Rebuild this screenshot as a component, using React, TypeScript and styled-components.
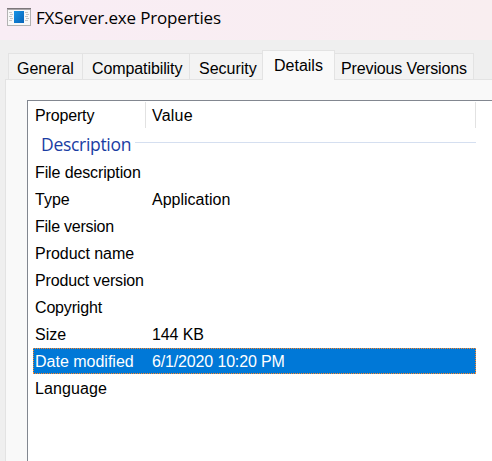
import React from "react";
import styled, { createGlobalStyle } from "styled-components";

const GlobalStyle = createGlobalStyle`
  * { box-sizing: border-box; }
  html, body { margin: 0; overflow: hidden; }
  body { font: 16px/20px "Liberation Sans", Arial, sans-serif; color: #000; }
`;

const Window = styled.main`
  width: 492px;
  height: 461px;
  display: flex;
  flex-direction: column;
  background: #efefef;
  overflow: hidden;
  white-space: nowrap;
`;

const TitleBar = styled.header`
  flex: none;
  height: 40px;
  display: flex;
  align-items: flex-start;
  gap: 5px;
  padding: 8px 0 0 7px;
  background: linear-gradient(90deg, #f9edf5, #f9eef0);
`;

const Title = styled.h1`
  margin: -2px 0 0;
  font: 400 17px/24px "Open Sans", "Noto Sans", sans-serif;
  letter-spacing: -0.16px;
`;

const TabStrip = styled.nav`
  flex: none;
  height: 39px;
  display: flex;
  align-items: flex-end;
  padding-left: 8px;
`;

const Tab = styled.div<{ $width: number; $active?: boolean; $track?: number; $inset?: number }>`
  flex: none;
  width: ${(p) => p.$width}px;
  height: ${(p) => (p.$active ? 30 : 26)}px;
  margin-bottom: ${(p) => (p.$active ? -1 : 0)}px;
  padding: 5px 0 0 ${(p) => p.$inset ?? 9}px;
  border: 1px solid #e3e3e3;
  border-bottom: 0;
  border-right-width: ${(p) => (p.$active ? 1 : 0)}px;
  background: ${(p) => (p.$active ? "#f9f9f9" : "#f3f3f3")};
  letter-spacing: ${(p) => p.$track ?? 0}px;
  z-index: ${(p) => (p.$active ? 1 : 0)};

  &:last-child {
    border-left: 0;
    border-right-width: 1px;
  }
`;

const Page = styled.section`
  flex: 1;
  display: flex;
  margin-left: 5px;
  padding: 20px 0 0 21px;
  border: solid #e3e3e3;
  border-width: 1px 0 0 1px;
  background: #f9f9f9;
`;

const List = styled.div`
  flex: 1;
  border: solid #828790;
  border-width: 1px 0 0 1px;
  background: #fff;
`;

const ColumnHeader = styled.div`
  display: grid;
  grid-template-columns: 118px 330px;
  height: 26px;
  margin-top: 1px;
`;

const HeaderCell = styled.div<{ $inset: number; $track?: number }>`
  padding: 4px 0 0 ${(p) => p.$inset}px;
  border-right: 1px solid #e2e2e2;
  letter-spacing: ${(p) => p.$track ?? 0}px;
`;

const Group = styled.div`
  display: flex;
  align-items: flex-start;
  gap: 4px;
  width: 448px;
  height: 31px;
  padding-left: 13px;
`;

const GroupName = styled.h2`
  margin: 4px 0 0;
  width: 90px;
  color: #1a3da3;
  font: 400 17.5px/24px "Open Sans", "Noto Sans", sans-serif;
  letter-spacing: -0.3px;
`;

const Rule = styled.div`
  flex: 1;
  height: 1px;
  margin-top: 14px;
  background: #d5dff0;
`;

/* One-pixel alternating dots, drawn along each edge of the focused row. */
const dotsX = "repeating-linear-gradient(90deg, #ff8728 0 1px, #0078d7 1px 2px)";
const dotsY = "repeating-linear-gradient(180deg, #ff8728 0 1px, #0078d7 1px 2px)";

const Row = styled.div<{ $selected?: boolean }>`
  display: grid;
  grid-template-columns: 117px 1fr;
  width: 443px;
  height: 26px;
  margin: 0 0 1px 5px;
  padding: 4px 0 0 2px;
  background: ${(p) =>
    p.$selected
      ? `${dotsX} 0 0 / 100% 1px no-repeat, ${dotsX} 0 100% / 100% 1px no-repeat,
         ${dotsY} 0 0 / 1px 100% no-repeat, ${dotsY} 100% 0 / 1px 100% no-repeat, #0078d7`
      : "transparent"};
  color: ${(p) => (p.$selected ? "#fff" : "#000")};
`;

const Text = styled.span<{ $track?: number }>`
  letter-spacing: ${(p) => p.$track ?? 0}px;
`;

interface Property {
  name: string;
  value?: string;
  track?: number;
  valueTrack?: number;
  selected?: boolean;
}

const properties: Property[] = [
  { name: "File description", track: -0.12 },
  { name: "Type", value: "Application" },
  { name: "File version", track: -0.25 },
  { name: "Product name", track: -0.04 },
  { name: "Product version", track: -0.16 },
  { name: "Copyright", track: -0.17 },
  { name: "Size", value: "144 KB", valueTrack: -0.1 },
  { name: "Date modified", value: "6/1/2020 10:20 PM", valueTrack: -0.15, selected: true },
  { name: "Language", track: 0.1 },
];

function AppIcon() {
  return (
    <svg width="24" height="18" viewBox="0 0 24 18" shapeRendering="crispEdges">
      <defs>
        <linearGradient id="pane" x1="0" y1="0" x2="1" y2="1">
          <stop stopColor="#1593e6" />
          <stop offset="1" stopColor="#0864b8" />
        </linearGradient>
      </defs>
      <path fill="#f8f8f8" stroke="#b3b3b3" d="M.5.5h23v17H.5z" />
      <path fill="#7d777b" d="M0 0h24v1H0z" />
      <path fill="#aaa5a8" d="M0 1h24v1H0z" />
      <path fill="url(#pane)" d="M7 3h10v12H7z" />
      <path stroke="#c4c4c4" d="M2 4.5h3M3 6.5h3M2 8.5h3M3 10.5h3M2 12.5h3M18 4.5h3M19 6.5h3M18 8.5h3M19 10.5h3M18 12.5h3" />
    </svg>
  );
}

export default function App() {
  return (
    <>
      <GlobalStyle />
      <Window>
        <TitleBar>
          <AppIcon />
          <Title>FXServer.exe Properties</Title>
        </TitleBar>
        <TabStrip>
          <Tab $width={74} $inset={8}>General</Tab>
          <Tab $width={107} $track={-0.1}>Compatibility</Tab>
          <Tab $width={73}>Security</Tab>
          <Tab $width={73} $inset={11} $active>Details</Tab>
          <Tab $width={139} $inset={6} $track={-0.13}>Previous Versions</Tab>
        </TabStrip>
        <Page>
          <List>
            <ColumnHeader>
              <HeaderCell $inset={7} $track={-0.15}>Property</HeaderCell>
              <HeaderCell $inset={6} $track={0.2}>Value</HeaderCell>
            </ColumnHeader>
            <Group>
              <GroupName>Description</GroupName>
              <Rule />
            </Group>
            {properties.map((p) => (
              <Row key={p.name} $selected={p.selected}>
                <Text $track={p.track}>{p.name}</Text>
                <Text $track={p.valueTrack}>{p.value}</Text>
              </Row>
            ))}
          </List>
        </Page>
      </Window>
    </>
  );
}
